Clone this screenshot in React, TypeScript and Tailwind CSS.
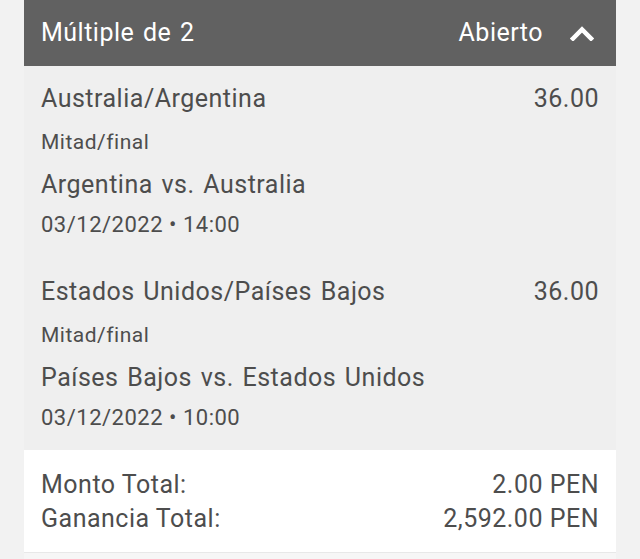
const selections = [
  {
    pick: "Australia/Argentina",
    odds: "36.00",
    market: "Mitad/final",
    match: "Argentina vs. Australia",
    date: "03/12/2022 • 14:00",
  },
  {
    pick: "Estados Unidos/Países Bajos",
    odds: "36.00",
    market: "Mitad/final",
    match: "Países Bajos vs. Estados Unidos",
    date: "03/12/2022 • 10:00",
  },
];

function ChevronUp() {
  return (
    <svg width="24" height="15" viewBox="0 0 24 15" fill="none">
      <polyline
        points="3,12.5 12,3.5 21,12.5"
        stroke="white"
        strokeWidth="4.5"
        strokeLinecap="square"
        strokeLinejoin="miter"
      />
    </svg>
  );
}

export default function App() {
  return (
    <div
      className="min-h-screen bg-[#f2f2f2] px-[24px] text-[#4d4d4d] tracking-[0.5px]"
      style={{ fontFamily: "Roboto, 'Liberation Sans', sans-serif" }}
    >
      {/* Header */}
      <div className="h-[66px] bg-[#616161] pl-[17px] pr-[22px] flex items-center justify-between text-white text-[25px] [word-spacing:2px]">
        <span>Múltiple de 2</span>
        <div className="flex items-center gap-[27px]">
          <span>Abierto</span>
          <ChevronUp />
        </div>
      </div>

      {/* Selections */}
      <div className="bg-[#efefef] px-[17px] pt-[18px] pb-[18px] flex flex-col gap-[38px]">
        {selections.map((s, i) => (
          <div key={i} className="flex flex-col">
            <div className="flex justify-between text-[25px] leading-[30px] [word-spacing:2px]">
              <span>{s.pick}</span>
              <span>{s.odds}</span>
            </div>
            <div className="mt-[14px] text-[21px] leading-[28px]">{s.market}</div>
            <div className="mt-[14px] text-[25px] leading-[30px] [word-spacing:2px]">{s.match}</div>
            <div className="mt-[11px] text-[22px] leading-[28px]">{s.date}</div>
          </div>
        ))}
      </div>

      {/* Totals */}
      <div className="bg-white px-[17px] pt-[18px] pb-[16px] text-[25px] leading-[34px]">
        <div className="flex justify-between">
          <span>Monto Total:</span>
          <span>2.00 PEN</span>
        </div>
        <div className="flex justify-between">
          <span>Ganancia Total:</span>
          <span>2,592.00 PEN</span>
        </div>
      </div>
      <div className="h-[7px] border-t border-[#e8e8e8] bg-[#f6f6f6]" />
    </div>
  );
}
